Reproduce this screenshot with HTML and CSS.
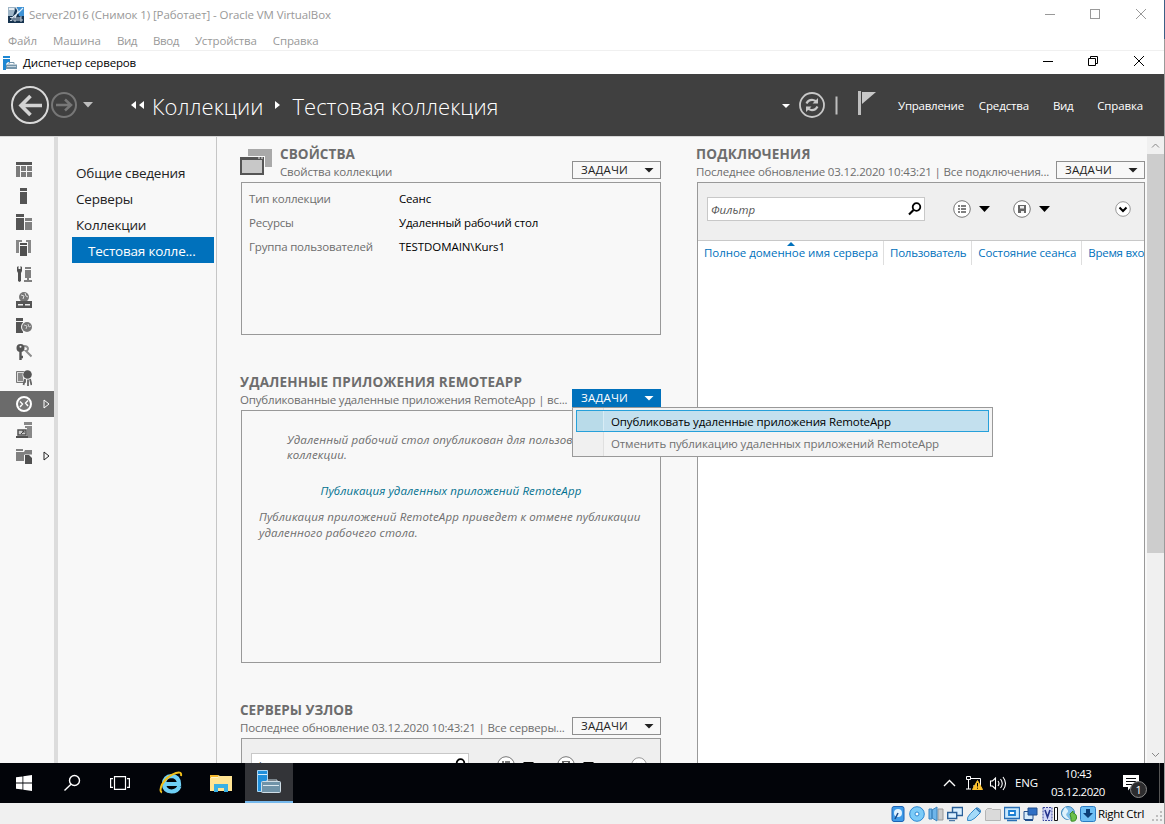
FILE: index.html
```html
<!DOCTYPE html>
<html lang="ru">
<head>
<meta charset="utf-8">
<title>Server2016 (Снимок 1) [Работает] - Oracle VM VirtualBox</title>
<link rel="stylesheet" href="styles.css">
</head>
<body>
<div class="window">
  <header class="vm-title">
    <svg class="vm-logo" width="16" height="16" viewBox="0 0 16 16"><rect width="16" height="16" fill="#16334f"/><path d="M0 0h8L5 9H0z" fill="#9db4c6"/><path d="M1 1h5v2H1z" fill="#e8eef3"/><path d="M9 0h7v9h-5z" fill="#3f93d6"/><path d="M8 0l2 4-3 7M15 1l-5 5-6 5" stroke="#e4f1fb" stroke-width="1.1" fill="none"/><path d="M2 10.500h2v3H2M6 10v4h2v-4zM10 10v4M12 14v-4h2M12 12h2v2h-2" stroke="#d5dde6" stroke-width=".9" fill="none"/></svg>
    <span class="vm-name">Server2016 (Снимок 1) [Работает] - Oracle VM VirtualBox</span>
    <svg class="vm-buttons" width="120" height="16" viewBox="0 0 120 16" fill="none" stroke="#999"><path d="M5 8.500h10"/><rect x="50.500" y="3.500" width="9" height="9"/><path d="M96 3l10 10M106 3L96 13"/></svg>
  </header>
  <nav class="vm-menu">
    <span>Файл</span><span class="even">Машина</span><span class="tight">Вид</span><span class="tight">Ввод</span><span>Устройства</span><span>Справка</span>
  </nav>
  <header class="app-title">
    <svg class="app-logo" width="14" height="14" viewBox="0 0 14 14"><path d="M0 0h7v2H0zM0 3h7v3H5L3 8v6H0z" fill="#1d87d3"/><path d="M3 8.500h11V13H3z" fill="#7696ab"/><path d="M6 8V6.500h5V8M4 10h9" stroke="#7696ab" fill="none"/><path d="M4 10.500h9" stroke="#d6e2ea" stroke-width=".8"/></svg>
    <span class="app-name">Диспетчер серверов</span>
    <svg class="app-buttons" width="120" height="16" viewBox="0 0 120 16" fill="none" stroke="#000"><path d="M5 8.500h10"/><path d="M50.500 5.500h7v7h-7zM52.500 5.500v-2h7v7h-2"/><path d="M96 3l10 10M106 3L96 13"/></svg>
  </header>

  <div class="banner">
    <svg class="history" width="90" height="42" viewBox="0 0 90 42" fill="none"><circle cx="22" cy="21" r="18" stroke="#d9d9d9" stroke-width="2"/><path d="M12 21.500H34M22.500 12L13 21.500l9.500 9.500" stroke="#d3d3d3" stroke-width="3.600"/><circle cx="56" cy="21" r="12" stroke="#777" stroke-width="2"/><path d="M48 21h14M57 15.500l6 5.500-6 5.500" stroke="#777" stroke-width="2.500"/><path d="M75 18h10l-5 5.500z" fill="#bebebe"/></svg>
    <svg class="crumb-back" width="14" height="10" viewBox="0 0 14 10" fill="#fff"><path d="M5 1v8L0 5zM13 1v8L8 5z"/></svg>
    <span class="crumb">Коллекции</span>
    <svg class="crumb-next" width="6" height="10" viewBox="0 0 6 10" fill="#fff"><path d="M0 1v8l5-4z"/></svg>
    <span class="crumb">Тестовая коллекция</span>
    <svg class="banner-tools" width="100" height="36" viewBox="0 0 100 36" fill="none"><path d="M3 16h8l-4 4z" fill="#fff"/><circle cx="33" cy="17" r="12" stroke="#c8c8c8" stroke-width="1.800"/><path d="M27.500 15.500q2-4 6.500-3.500 2 .2 4 2.500M38.500 18.500q-2 4-6.500 3.500-2-.2-4-2.500" stroke="#c8c8c8" stroke-width="2.200"/><path d="M39 10v5.500h-5.500zM27 24v-5.500h5.500z" fill="#c8c8c8"/><path d="M57.500 8.500v18" stroke="#bebebe" stroke-width="2"/><path d="M79 3h3v24h-3z" fill="#bebebe"/><path d="M83 4h14L83 16z" fill="#c8c8c8"/></svg>
    <nav class="banner-menu"><span class="snug">Управление</span><span>Средства</span><span class="tight">Вид</span><span>Справка</span></nav>
  </div>

  <main class="main">
    <aside class="rail">
      <div class="rail-item"><svg width="16" height="16" viewBox="0 0 16 16" fill="#7c7c7c"><path d="M0 0h16v3H0z" fill="#555"/><path d="M0 4h4v11H0zM5 4h5v5H5zM11 4h5v5h-5zM5 10h5v5H5zM11 10h5v5h-5z"/></svg></div>
      <div class="rail-item"><svg width="16" height="16" viewBox="0 0 16 16" fill="#555"><path d="M4 0h7v3H4zM4 4h7v12H4z"/></svg></div>
      <div class="rail-item"><svg width="16" height="16" viewBox="0 0 16 16" fill="#555"><path d="M0 0h8v3H0zM0 4h8v12H0z"/><path d="M9 4h7v3H9zM9 8h7v8H9z" fill="#808080"/></svg></div>
      <div class="rail-item"><svg width="16" height="16" viewBox="0 0 16 16" fill="#888"><path d="M0 0h6v2H3v11H0zM10 0h5v13h-3V2h-2z"/><path d="M3.500 2.500h8V16h-8z" fill="#f8f8f8"/><path d="M4 3h7v2H4zM4 6h7v10H4z" fill="#505050"/></svg></div>
      <div class="rail-item"><svg width="16" height="16" viewBox="0 0 16 16" fill="#808080"><path d="M9 1h6v2H9zM9 4h6v8H9zM11 12h2v2h3v2H8v-2h3z"/><path d="M1 1l1.500-1v3h2V0L6 1v4L5 7v8l-1.500 1L2 15V7L1 5z" fill="#505050"/></svg></div>
      <div class="rail-item"><svg width="16" height="16" viewBox="0 0 16 16" fill="#555"><circle cx="8" cy="5" r="5" fill="#777"/><path d="M5 3l3 1-1 3M9 1l1 3 2 1" stroke="#ddd" fill="none"/><path d="M0 9h16v7H0z"/><path d="M2 12h5v1.500H2zM9 12h5v1.500H9z" fill="#eee"/></svg></div>
      <div class="rail-item"><svg width="16" height="16" viewBox="0 0 16 16" fill="#555"><path d="M0 0h7v3H0zM0 4h7v11H0z"/><circle cx="11" cy="9" r="6" fill="#f8f8f8"/><circle cx="11" cy="9" r="5" fill="#777"/><path d="M8 7l3 1-1 3M12 6l1 3 2-1" stroke="#ccc" fill="none"/></svg></div>
      <div class="rail-item"><svg width="16" height="16" viewBox="0 0 16 16" fill="none"><path d="M8 2q4 0 4 3-.5 2-2 2l5.500 5.500" stroke="#8d8d8d" stroke-width="2"/><circle cx="4.500" cy="4" r="4" fill="#555"/><path d="M4.500 6v10M5 13h2" stroke="#555" stroke-width="2.400"/><circle cx="4.500" cy="2.800" r="1" fill="#eee"/></svg></div>
      <div class="rail-item"><svg width="16" height="16" viewBox="0 0 16 16"><path d="M.5 1.500h9v11h-9z" fill="#ddd" stroke="#777"/><path d="M2 3h5v8H2z" fill="#888"/><circle cx="11.500" cy="5" r="5" fill="#f8f8f8"/><circle cx="11.500" cy="4.500" r="4.300" fill="#555"/><path d="M9 9l-1.500 6M12 9.500V16M14 9l1.500 6" stroke="#666" stroke-width="1.800"/></svg></div>
      <div class="rail-item rail-active"><svg width="16" height="16" viewBox="0 0 16 16" fill="none" stroke="#fff"><circle cx="8" cy="8" r="7" stroke-width="2" fill="#777"/><path d="M4 5.500L6.500 8 4 11M12 4.500L9.500 7l2.500 3" stroke-width="1.400"/></svg><svg class="rail-arrow" width="7" height="10" viewBox="0 0 7 10" fill="none" stroke="#fff"><path d="M1 1v8l5-4z"/></svg></div>
      <div class="rail-item"><svg width="16" height="16" viewBox="0 0 16 16" fill="#888"><path d="M8 0h8v3H8zM9 4h7v12h-5V6H9z"/><path d="M2 8h8v5H2z" fill="#ccc" stroke="#505050" stroke-width="1.500"/><path d="M0 14h12v2H0z" fill="#505050"/><path d="M5 12l3-3M6 9h2v2" stroke="#444" fill="none"/></svg></div>
      <div class="rail-item"><svg width="16" height="16" viewBox="0 0 16 16" fill="#808080"><path d="M0 1h7v2H0zM0 4h8v9H0zM9 2h7v5H8V4z"/><path d="M8.500 6.500H16V16H8.500z" fill="#f8f8f8"/><path d="M9 7h4l3 3v6H9z" fill="#505050"/></svg><svg class="rail-arrow" width="7" height="10" viewBox="0 0 7 10" fill="none" stroke="#222"><path d="M1 1v8l5-4z"/></svg></div>
    </aside>
    <nav class="side">
      <span class="side-item">Общие сведения</span>
      <span class="side-item">Серверы</span>
      <span class="side-item">Коллекции</span>
      <span class="side-item side-active">Тестовая колле...</span>
    </nav>

    <div class="content">
      <div class="col-left">
        <section class="panel">
          <div class="panel-head">
            <svg class="panel-icon" width="32" height="32" viewBox="0 0 32 32"><path d="M8 4h24v18H8z" fill="#a9a9a9"/><path d="M0 11h25v19H0z" fill="#f8f8f8"/><path d="M1 13h22v16H1z" fill="#c8c8c8" stroke="#555" stroke-width="2"/><path d="M0 12h24v3H0z" fill="#555"/><path d="M18 12.500h2v1h-2zM21 12.500h2v1h-2z" fill="#eee"/></svg>
            <div class="panel-titles"><h2>СВОЙСТВА</h2><p>Свойства коллекции</p></div>
            <button class="tasks"><span>ЗАДАЧИ</span><i class="caret"></i></button>
          </div>
          <div class="box box-props">
            <span class="label">Тип коллекции</span><span>Сеанс</span>
            <span class="label">Ресурсы</span><span>Удаленный рабочий стол</span>
            <span class="label">Группа пользователей</span><span class="domain">TESTDOMAIN\Kurs1</span>
          </div>
        </section>

        <section class="panel">
          <div class="panel-head">
            <div class="panel-titles"><h2 class="wide">УДАЛЕННЫЕ ПРИЛОЖЕНИЯ REMOTEAPP</h2><p>Опубликованные удаленные приложения RemoteApp | вс...</p></div>
            <div class="tasks-wrap">
              <button class="tasks tasks-open"><span>ЗАДАЧИ</span><i class="caret"></i></button>
              <div class="menu">
                <div class="menu-item menu-hot">Опубликовать удаленные приложения RemoteApp</div>
                <div class="menu-item menu-off">Отменить публикацию удаленных приложений RemoteApp</div>
              </div>
            </div>
          </div>
          <div class="box box-apps">
            <p class="note note-in">Удаленный рабочий стол опубликован для пользов<br>коллекции.</p>
            <p class="note-link">Публикация удаленных приложений RemoteApp</p>
            <p class="note">Публикация приложений RemoteApp приведет к отмене публикации<br>удаленного рабочего стола.</p>
          </div>
        </section>

        <section class="panel">
          <div class="panel-head">
            <div class="panel-titles"><h2 class="even">СЕРВЕРЫ УЗЛОВ</h2><p>Последнее обновление 03.12.2020 10:43:21 | Все серверы...</p></div>
            <button class="tasks"><span>ЗАДАЧИ</span><i class="caret"></i></button>
          </div>
          <div class="box box-hosts">
            <div class="toolbar">
              <div class="filter"><span>Фильтр</span><svg width="14" height="14" viewBox="0 0 14 14" fill="none" stroke="#000"><circle cx="8.500" cy="5" r="3.800" stroke-width="1.800"/><path d="M5.500 8L1 12.500" stroke-width="2.200"/></svg></div>
              <svg class="tool-icons" width="98" height="20" viewBox="0 0 98 20" fill="none"><circle cx="9" cy="10" r="8.300" fill="#fff" stroke="#777"/><path d="M5 7h2M5 10h2M5 13h2M8 7h5M8 10h5M8 13h5" stroke="#555" stroke-width="1.500"/><path d="M26 7h11l-5.500 6z" fill="#000"/><circle cx="69" cy="10" r="8.300" fill="#fff" stroke="#777"/><path d="M65 6h8v8h-8z" fill="#666"/><path d="M67 7h4v2.500h-4zM68 12h3v2h-3z" fill="#eee"/><path d="M86 7h11l-5.500 6z" fill="#000"/></svg>
              <svg class="expand" width="16" height="20" viewBox="0 0 16 20" fill="none"><circle cx="8" cy="10" r="7.300" fill="#fff" stroke="#999"/><path d="M4.500 8.500L8 12l3.500-3.500" stroke="#000" stroke-width="2"/></svg>
            </div>
          </div>
        </section>
      </div>

      <div class="col-right">
        <section class="panel">
          <div class="panel-head">
            <div class="panel-titles"><h2 class="wide">ПОДКЛЮЧЕНИЯ</h2><p>Последнее обновление 03.12.2020 10:43:21 | Все подключения...</p></div>
            <button class="tasks"><span>ЗАДАЧИ</span><i class="caret"></i></button>
          </div>
          <div class="box box-grid">
            <div class="toolbar">
              <div class="filter"><span>Фильтр</span><svg width="14" height="14" viewBox="0 0 14 14" fill="none" stroke="#000"><circle cx="8.500" cy="5" r="3.800" stroke-width="1.800"/><path d="M5.500 8L1 12.500" stroke-width="2.200"/></svg></div>
              <svg class="tool-icons" width="98" height="20" viewBox="0 0 98 20" fill="none"><circle cx="9" cy="10" r="8.300" fill="#fff" stroke="#777"/><path d="M5 7h2M5 10h2M5 13h2M8 7h5M8 10h5M8 13h5" stroke="#555" stroke-width="1.500"/><path d="M26 7h11l-5.500 6z" fill="#000"/><circle cx="69" cy="10" r="8.300" fill="#fff" stroke="#777"/><path d="M65 6h8v8h-8z" fill="#666"/><path d="M67 7h4v2.500h-4zM68 12h3v2h-3z" fill="#eee"/><path d="M86 7h11l-5.500 6z" fill="#000"/></svg>
              <svg class="expand" width="16" height="20" viewBox="0 0 16 20" fill="none"><circle cx="8" cy="10" r="7.300" fill="#fff" stroke="#999"/><path d="M4.500 8.500L8 12l3.500-3.500" stroke="#000" stroke-width="2"/></svg>
            </div>
            <div class="columns">
              <div class="column column-sorted">Полное доменное имя сервера</div>
              <div class="column snug">Пользователь</div>
              <div class="column">Состояние сеанса</div>
              <div class="column">Время вхо</div>
            </div>
          </div>
        </section>
      </div>
    </div>

    <div class="scroll">
      <svg width="17" height="17" viewBox="0 0 17 17" fill="none" stroke="#888"><path d="M5 10.500L8.500 7l3.500 3.500"/></svg>
      <div class="thumb"></div>
      <svg class="scroll-down" width="17" height="17" viewBox="0 0 17 17" fill="none" stroke="#888"><path d="M5 7l3.500 3.500L12 7"/></svg>
    </div>
  </main>

  <footer class="taskbar">
    <div class="slot"><svg width="16" height="16" viewBox="0 0 16 16" fill="#fff"><path d="M0 2.300L6.500 1.400V7.500H0zM7.300 1.300L16 0v7.500H7.300zM0 8.400h6.500v6.200L0 13.700zM7.300 8.400H16V16l-8.700-1.300z"/></svg></div>
    <div class="slot"><svg width="18" height="18" viewBox="0 0 18 18" fill="none" stroke="#fff" stroke-width="1.400"><circle cx="11.500" cy="6.500" r="5"/><path d="M8 10.200L1.500 16.500"/></svg></div>
    <div class="slot"><svg width="20" height="14" viewBox="0 0 20 14" fill="none" stroke="#fff" stroke-width="1.200"><path d="M4.500.6h11v12.800h-11zM3 2.600H.6v8.800H3M17 2.600h2.400v8.800H17"/></svg></div>
    <div class="slot slot-ie"><svg width="26" height="24" viewBox="0 0 26 24" fill="none"><path d="M21.500 15q-2 5.500-8 5.500-7.500-.5-7.500-8 .5-7 7.500-7.500 7.500.5 7.500 8H8" stroke="#6fd0f6" stroke-width="4.200"/><path d="M4 21.500q-3-1 0-8Q9 5 18 2q6-2 5 3" stroke="#f2bf1a" stroke-width="2"/></svg></div>
    <div class="slot slot-files"><svg width="22" height="18" viewBox="0 0 22 18"><path d="M0 1h8l2 1h12v15H0z" fill="#ffe493"/><path d="M0 1h8v3H0z" fill="#f5b92e"/><path d="M1 3h7v1H1z" fill="#fff3c8"/><path d="M4 18v-8h14v8h-4v-4H8v4z" fill="#38b0e4"/></svg></div>
    <div class="slot slot-active"><svg width="24" height="24" viewBox="0 0 24 24"><path d="M.5.5h10v21H.5z" fill="#2090dc" stroke="#a9d6f5"/><path d="M1 4.500h9" stroke="#d8eefc"/><path d="M10 12V10h10v2" stroke="#c5d6e0" fill="none"/><rect x="4.500" y="11.500" width="19" height="11" rx="1" fill="#7093a8" stroke="#cfdde6"/><path d="M6 15.500h16" stroke="#dbe7ee"/></svg></div>
    <div class="tray">
      <svg width="66" height="20" viewBox="0 0 66 20" fill="none" stroke="#fff" class="tray-icons"><path d="M2 13l5.500-5.500L13 13" stroke-width="1.400"/><path d="M24.500 3.500h4v3h-4zM26.500 7v9M24 16h5M29 5.500h9.500v7.500H31"/><path d="M35.500 7.500l5 9h-10z" fill="#fbc02d" stroke="#fbc02d"/><path d="M35.500 10v3.500M35.500 14.700v1" stroke="#000"/><path d="M48.500 8v5h2l3 3V5l-3 3zM56 8q2 2.500 0 5M58.500 6q3.500 4.500 0 9M61 4q5 6.500 0 13" stroke-width="1.100"/></svg>
      <span class="lang">ENG</span>
      <span class="clock"><span>10:43</span><span>03.12.2020</span></span>
      <div class="notify"><svg width="16" height="16" viewBox="0 0 16 16"><path d="M0 0h16v12H8l-3 3.500V12H0z" fill="#fff"/><path d="M3 3.500h10M3 6.500h10M3 9.500h7" stroke="#05070a"/></svg><span class="badge">1</span></div>
      <i class="peek"></i>
    </div>
  </footer>

  <footer class="vm-status">
    <svg width="16" height="16" viewBox="0 0 16 16"><rect x="2" y=".5" width="12" height="15" rx="2" fill="#3f9be8" stroke="#1c62b5"/><circle cx="8" cy="7" r="4" fill="#e2f3ff"/><path d="M8 7l-3 6" stroke="#1c4a8a" stroke-width="1.500"/></svg>
    <svg width="16" height="16" viewBox="0 0 16 16"><circle cx="8" cy="8" r="7.300" fill="#7ccbf8" stroke="#2b87d2"/><circle cx="8" cy="8" r="2" fill="#fff" stroke="#2b87d2"/></svg>
    <svg width="16" height="16" viewBox="0 0 16 16"><path d="M10 3h5v11h-5z" fill="#ccc" stroke="#999"/><path d="M1 3h3v10H1zM4 4l5-3v14l-5-3z" fill="#6fb5ea" stroke="#3b83bd"/></svg>
    <svg width="16" height="16" viewBox="0 0 16 16" fill="#d9efff" stroke="#2a5f98"><path d="M5.500 1.500h10v8h-10z" stroke-width="1.400"/><path d="M.7 6.500h9v6h-9z" stroke-width="1.400"/><path d="M2 14.700h6"/></svg>
    <svg width="16" height="16" viewBox="0 0 16 16"><path d="M1.500 14.500q-1-3 3-7l5-5q2-1.500 4 .5t.5 4l-5 5q-4 3.500-7.500 2.500z" fill="#a3daf9" stroke="#3489c9"/><path d="M10 2l4 4" stroke="#2c6fae" stroke-width="1.500"/></svg>
    <svg width="16" height="16" viewBox="0 0 16 16"><path d="M.5 4.500l2-2h4l1 1h8v11H.5z" fill="#dadada" stroke="#b5b5b5"/></svg>
    <svg width="16" height="16" viewBox="0 0 16 16"><path d="M.5 1.500h15v11H.5zM3 14.500h10" fill="#c9e8fd" stroke="#2a6fb4" stroke-width="1.300"/><path d="M5 5h6v4H5z" fill="#fff" stroke="#1c7fd2" stroke-width="1.800"/></svg>
    <svg width="16" height="16" viewBox="0 0 16 16"><path d="M1 5.500h9v8H1z" fill="#d7ebfb" stroke="#234f8c"/><path d="M5 2h9v7H5z" fill="#2f6fc4" stroke="#234f8c"/><path d="M2 14h8" stroke="#234f8c" stroke-width="2"/></svg>
    <svg width="16" height="16" viewBox="0 0 16 16"><path d="M1 1.500h9v13H1z" fill="#d3d8f8" stroke="#3b479c" stroke-dasharray="2 1"/><path d="M3 4l2.500 7L8 4" stroke="#27348c" stroke-width="1.600" fill="none"/><path d="M12.500 1.500h3v13h-3z" fill="#fff" stroke="#111"/></svg>
    <svg width="16" height="16" viewBox="0 0 16 16"><circle cx="7" cy="7" r="6.500" fill="#7fbfea" stroke="#3d84b8"/><path d="M4 1q5 4 2 6t4 7q-8-1-9-7z" fill="#dff1fb"/><path d="M9 8l3-3v2q4 1 3.500 5T10 15v-3z" fill="#6cc04a" stroke="#3c8a25"/></svg>
    <svg width="16" height="16" viewBox="0 0 16 16"><rect x=".5" y=".5" width="15" height="15" rx="2" fill="#6fc0f5" stroke="#2b7cc4"/><path d="M6 3h4v4h3l-5 5-5-5h3z" fill="#0b3f78"/></svg>
    <span class="host-key">Right Ctrl</span>
    <svg class="grip" width="12" height="12" viewBox="0 0 12 12" fill="#bdbdbd"><path d="M8 0h2v2H8zM4 4h2v2H4zM8 4h2v2H8zM0 8h2v2H0zM4 8h2v2H4zM8 8h2v2H8z"/></svg>
  </footer>
</div>
</body>
</html>
```
FILE: styles.css
```css
* { box-sizing: border-box; }
body { margin: 0; font-family: "Open Sans", "Noto Sans", sans-serif; font-size: 11.5px; line-height: 18px; letter-spacing: -0.13px; color: #000; background: #fff; }
h2, p { margin: 0; }
svg { display: block; flex: none; }
span, h2, p { white-space: nowrap; }

.even { letter-spacing: 0; }
.snug { letter-spacing: -0.26px; }
.tight { letter-spacing: -0.42px; }

.window { width: 1165px; height: 824px; display: flex; flex-direction: column; overflow: hidden; border-right: 1px solid; border-image: linear-gradient(#3c5f85 40px, #9a9a9a 40px) 1; }

.vm-title { height: 29px; display: flex; align-items: center; padding-left: 8px; color: #999; letter-spacing: -0.1px; flex: none; }
.vm-name { margin-left: 5px; }
.vm-buttons { margin: 0 4px 1px auto; }
.vm-menu { height: 22px; display: flex; gap: 16px; padding: 3px 0 0 8px; color: #999; border-bottom: 1px solid #f0f0f0; flex: none; }
.app-title { height: 23px; display: flex; align-items: center; padding-left: 3px; flex: none; }
.app-name { margin-left: 6px; letter-spacing: -0.15px; }
.app-buttons { margin: 0 6px 3px auto; }

.banner { height: 63px; background: #404040; border-bottom: 1px solid #d6d6d6; display: flex; align-items: center; padding-left: 8px; color: #fff; flex: none; }
.history { margin-right: 33px; }
.crumb-back { margin-right: 7px; }
.crumb { font-size: 22px; font-weight: 300; line-height: 32px; padding-top: 2px; letter-spacing: 0.03px; }
.crumb-next { margin: 0 11px 0 12px; }
.banner-tools { margin: 2px 19px 0 auto; }
.banner-menu { display: flex; margin-right: 21px; gap: 15px; padding-top: 1px; }
.banner-menu span:nth-child(n+3) { margin-left: 9px; }

.main { flex: 1; min-height: 0; display: flex; background: #f8f8f8; }
.rail { width: 58px; padding-top: 20px; border-right: 4px solid #dcdcdc; flex: none; }
.rail-item { height: 26px; display: flex; align-items: center; padding-left: 16px; }
.rail-active { background: #6b6b6b; }
.rail-arrow { margin-left: 11px; }
.side { width: 159px; padding: 22px 2px 0 14px; display: flex; flex-direction: column; border-right: 1px solid #c6c6c6; font-size: 13.5px; line-height: 28px; letter-spacing: -0.2px; color: #222; flex: none; }
.side-item { height: 26px; padding-left: 4px; }
.side-active { background: #0071bc; color: #fff; padding-left: 16px; }

.content { flex: 1; min-width: 0; display: flex; gap: 35px; padding: 8px 2px 0 23px; overflow: hidden; }
.col-left { width: 421px; display: flex; flex-direction: column; gap: 38px; flex: none; }
.col-right { flex: 1; min-width: 0; display: flex; }
.col-right .panel { flex: 1; min-width: 0; display: flex; flex-direction: column; }
.panel { flex: none; }
.panel-head { height: 37px; display: flex; align-items: flex-start; color: #6d6d6d; flex: none; }
.panel-icon { margin-right: 8px; }
.panel-titles { flex: 1; min-width: 0; letter-spacing: -0.165px; }
.panel-titles h2 { font-size: 13.5px; line-height: 18px; font-weight: 700; letter-spacing: 0.08px; }
.panel-titles .wide { letter-spacing: 0.19px; }
.panel-titles .even { letter-spacing: 0; }
.tasks-wrap { position: relative; }
.tasks { width: 89px; height: 18px; margin: 16px 0 0; padding: 0 6px 0 8px; display: flex; align-items: center; justify-content: space-between; background: #f8f8f8; border: 1px solid #8f8f8f; font: inherit; line-height: 16px; letter-spacing: 0.2px; color: #222; }
.tasks-open { background: #0071bc; border-color: #0071bc; color: #fff; }
.caret { width: 10px; height: 5px; background: currentColor; clip-path: polygon(0 0, 100% 0, 50% 100%); }
.box { margin-left: 1px; border: 1px solid #999; }
.box-props { height: 153px; display: grid; grid-template-columns: 150px 1fr; grid-auto-rows: 24px; line-height: 24px; letter-spacing: -0.18px; padding: 4px 0 0 7px; }
.label { color: #6d6d6d; }
.domain { letter-spacing: -0.08px; }
.box-apps { height: 253px; padding: 21px 17px 0; font-style: italic; color: #6d6d6d; line-height: 16px; letter-spacing: 0.14px; overflow: hidden; }
.note-in { padding-left: 28px; line-height: 15px; }
.note-link { margin: 21px 0 10px; text-align: center; letter-spacing: 0.11px; color: #00708f; }
.box-hosts { height: 120px; }
.box-grid { flex: 1; background: #fff; overflow: hidden; border-bottom: 0; }

.menu { position: absolute; left: 0; top: 34px; z-index: 2; width: 421px; height: 50px; border: 1px solid #999; background: linear-gradient(90deg, #f0f0f0 30px, #e0e0e0 30px, #e0e0e0 31px, #f4f4f4 31px); padding: 2px 3px; color: #000; letter-spacing: -0.12px; white-space: nowrap; }
.menu-item { height: 22px; line-height: 20px; border: 1px solid transparent; padding: 1px 0 0 34px; }
.menu-hot { border-color: #26a0da; background: linear-gradient(90deg, #b9dbe9 26px, #d8ecf5 26px, #d8ecf5 27px, #c3e0ee 27px); }
.menu-off { color: #707070; }

.toolbar { height: 57px; background: #efefef; display: flex; align-items: flex-start; padding: 14px 0 0 9px; }
.filter { width: 218px; height: 24px; flex: none; background: #fff; border: 1px solid #c8c8c8; display: flex; align-items: center; justify-content: space-between; padding: 1px 2px 0 3px; font-style: italic; letter-spacing: 0; color: #555; }
.filter svg { margin-bottom: 1px; }
.tool-icons { margin: 2px 0 0 28px; }
.expand { margin: 2px 13px 0 auto; }
.columns { display: flex; border-top: 1px solid #c8c8c8; color: #0071bc; }
.column { height: 24px; line-height: 24px; padding: 0 5px 0 6px; border-right: 1px solid #dedede; position: relative; flex: none; white-space: nowrap; }
.column:last-child { border: 0; padding-right: 0; letter-spacing: -0.25px; }
.column-sorted { letter-spacing: -0.05px; }
.column-sorted::before { content: ""; position: absolute; left: 89px; top: 1px; width: 8px; height: 4px; background: #0071bc; clip-path: polygon(50% 0, 100% 100%, 0 100%); }

.scroll { width: 17px; background: #f0f0f0; display: flex; flex-direction: column; flex: none; }
.thumb { height: 399px; background: #cdcdcd; }
.scroll-down { margin-top: auto; }

.taskbar { height: 40px; background: #020409; color: #fff; display: flex; flex: none; }
.slot { width: 48px; display: flex; align-items: center; justify-content: center; }
.slot-ie { width: 53px; }
.slot-active { background: #333438; border-bottom: 2px solid #76b9ed; }
.tray { margin-left: auto; display: flex; align-items: center; }
.lang { margin-left: 7px; }
.clock { width: 54px; display: flex; flex-direction: column; align-items: center; margin-left: 13px; letter-spacing: -0.47px; }
.notify { position: relative; margin-left: 18px; }
.badge { position: absolute; left: 7px; top: 6px; width: 17px; height: 17px; border: 1px solid #8a8a8a; border-radius: 50%; background: #2c2c2e; font-size: 11px; line-height: 15px; text-align: center; }
.peek { width: 1px; height: 40px; background: #555; margin: 0 4px 0 20px; }
.vm-status { height: 21px; background: #f0f0f0; display: flex; align-items: center; justify-content: flex-end; gap: 3px; flex: none; }
.host-key { margin-left: -1px; letter-spacing: -0.33px; }
.grip { margin: 6px 0 0 5px; }
```
